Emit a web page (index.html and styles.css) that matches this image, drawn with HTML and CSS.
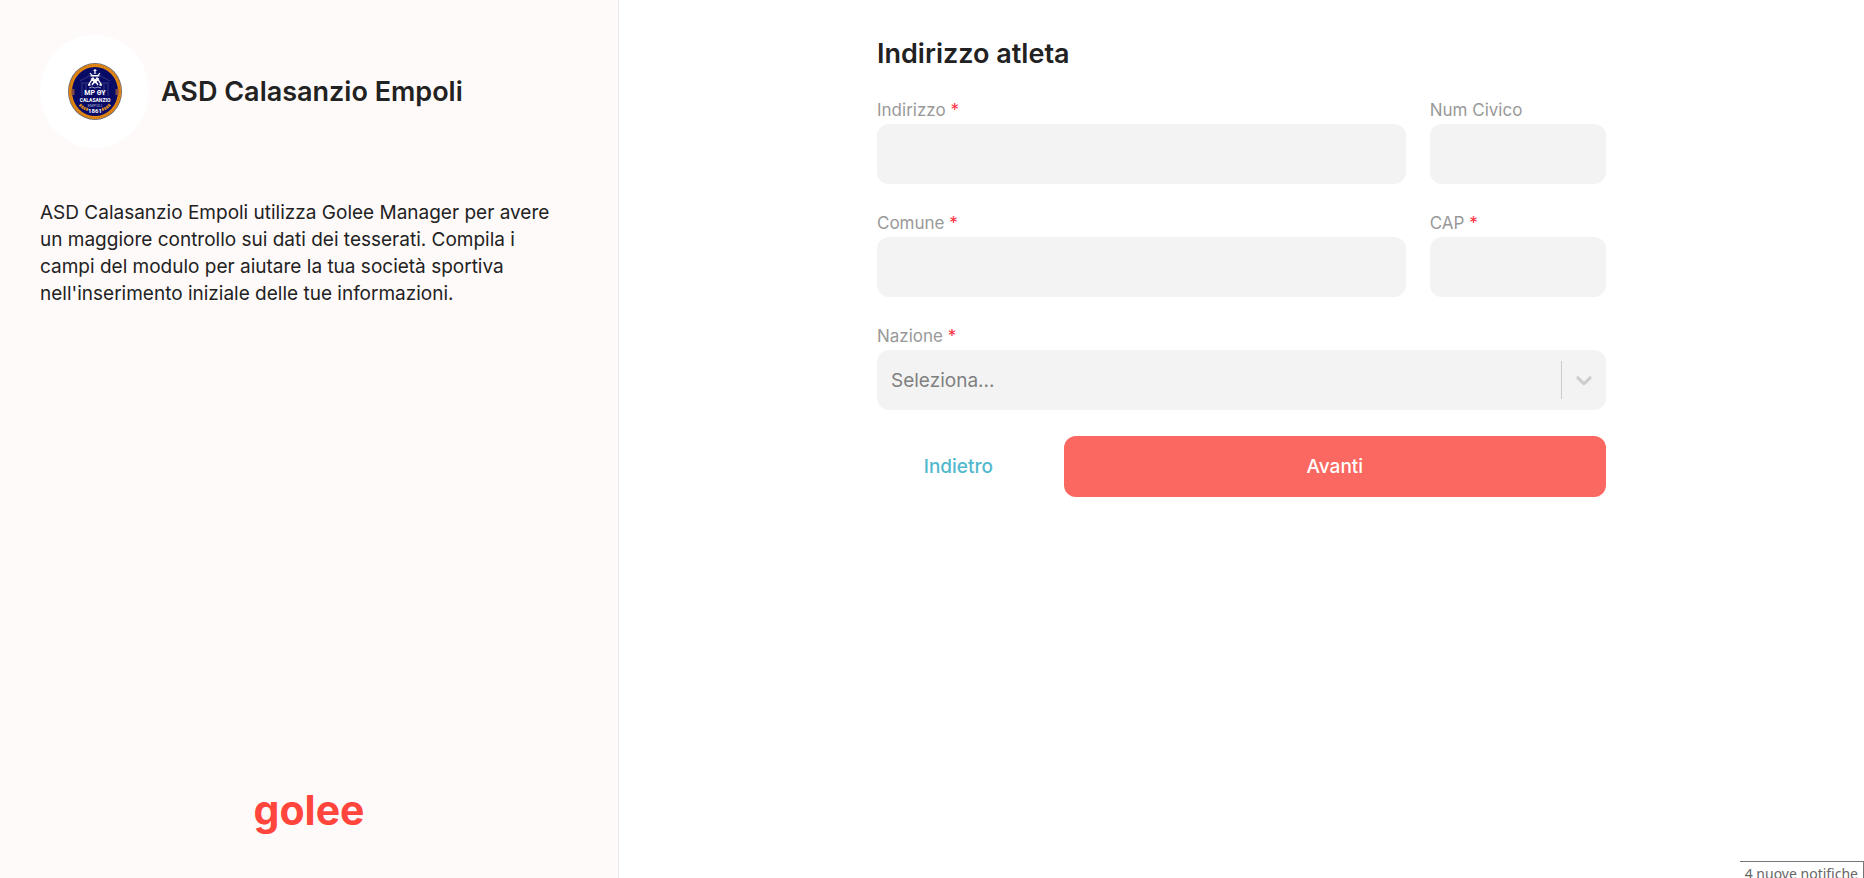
FILE: index.html
```html
<!DOCTYPE html>
<html lang="it">
<head>
    <meta charset="UTF-8">
    <meta name="viewport" content="width=device-width, initial-scale=1.0">
    <title>ASD Calasanzio Empoli - Golee</title>
    <link rel="stylesheet" href="styles.css">
</head>
<body>
    <div class="page">
        <aside class="sidebar">
            <header class="club">
                <div class="club-logo">
                    <svg class="crest" viewBox="0 0 54 57" preserveAspectRatio="none" role="img" aria-label="Stemma Calasanzio Empoli">
                        <ellipse cx="27" cy="28.5" rx="27" ry="28.5" fill="#6d6a70"/>
                        <ellipse cx="27" cy="28.5" rx="26.2" ry="27.7" fill="#e8890f"/>
                        <ellipse cx="27" cy="28.5" rx="24.8" ry="26.3" fill="none" stroke="#a9661f" stroke-width="1" stroke-dasharray="1 1.5"/>
                        <ellipse cx="27" cy="28.5" rx="23" ry="24.6" fill="#080b66"/>
                        <!-- facade -->
                        <path d="M12 18L27 10l15 8M13 20h28M14 21v12M18 21v12M36 21v12M40 21v12" fill="none" stroke="#2a2d76" stroke-width="1.4"/>
                        <path d="M5 26v6M49 26v6" stroke="#7d4a49" stroke-width="3"/>
                        <!-- crown and monogram -->
                        <path d="M27 6v5M25.500 7.500h3M22 10l2 2.500h6l2-2.500M22.500 13h9" fill="none" stroke="#fff" stroke-width="1.200"/>
                        <path d="M20.500 22l4.500-7 5 7M24 22l5-7 4.500 7M23 15.500l4 4 4-4M20 22h2.500M31.500 22h2.500" fill="none" stroke="#fff" stroke-width="1.300"/>
                        <path d="M21 25q3-2 6 0q3-2 6 0" fill="none" stroke="#8d90b8"/>
                        <text class="crest-text" x="27" y="31.500" font-size="7">ΜΡ ΘΥ</text>
                        <text class="crest-text" x="27" y="39" font-size="5">CALASANZIO</text>
                        <text class="crest-text crest-small" x="27" y="44" font-size="4">EMPOLI</text>
                        <text class="crest-text" x="27" y="50" font-size="6">1861</text>
                        <path d="M12 41.500q3 4 8 5M42 41.500q-3 4-8 5" fill="none" stroke="#d98a26" stroke-width="3" stroke-dasharray="2 .6"/>
                    </svg>
                </div>
                <h1 class="club-name">ASD Calasanzio Empoli</h1>
            </header>
            <p class="intro">ASD Calasanzio Empoli utilizza Golee Manager per avere un maggiore controllo sui dati dei tesserati. Compila i campi del modulo per aiutare la tua società sportiva nell'inserimento iniziale delle tue informazioni.</p>
            <div class="brand">golee</div>
        </aside>

        <main class="content">
            <form class="form">
                <h2 class="form-title">Indirizzo atleta</h2>
                <div class="fields">
                    <div class="field">
                        <label for="indirizzo">Indirizzo <span class="required">*</span></label>
                        <input class="control" type="text" id="indirizzo" required>
                    </div>
                    <div class="field">
                        <label for="civico">Num Civico</label>
                        <input class="control" type="text" id="civico">
                    </div>
                    <div class="field">
                        <label for="comune">Comune <span class="required">*</span></label>
                        <input class="control" type="text" id="comune" required>
                    </div>
                    <div class="field">
                        <label for="cap">CAP <span class="required">*</span></label>
                        <input class="control" type="text" id="cap" required>
                    </div>
                    <div class="field field-wide">
                        <label for="nazione">Nazione <span class="required">*</span></label>
                        <div class="select">
                            <select class="control" id="nazione" required>
                                <option value="">Seleziona...</option>
                                <option value="IT">Italia</option>
                            </select>
                            <span class="select-arrow">
                                <svg width="26" height="26" viewBox="0 0 20 20" aria-hidden="true">
                                    <path fill="currentColor" d="M4.516 7.548c0.436-0.446 1.043-0.481 1.576 0l3.908 3.747 3.908-3.747c0.533-0.481 1.141-0.446 1.574 0 0.436 0.445 0.408 1.197 0 1.615-0.406 0.418-4.695 4.502-4.695 4.502-0.217 0.223-0.502 0.335-0.787 0.335s-0.570-0.112-0.789-0.335c0 0-4.287-4.084-4.695-4.502s-0.436-1.170 0-1.615z"/>
                                </svg>
                            </span>
                        </div>
                    </div>
                </div>
                <div class="actions">
                    <button class="btn btn-link" type="button">Indietro</button>
                    <button class="btn btn-primary" type="submit">Avanti</button>
                </div>
            </form>
        </main>
    </div>
    <div class="notice" role="status">4 nuove notifiche</div>
</body>
</html>
```

FILE: styles.css
```css
:root {
    --text: #222;
    --label: #999;
    --field: #f3f3f3;
    --primary: #fb6761;
    --link: #51b9ce;
    --brand: #ff453c;
}

* {
    box-sizing: border-box;
}

body {
    margin: 0;
    font-family: Inter, "Liberation Sans", sans-serif;
    color: var(--text);
    background: #fff;
}

.page {
    display: grid;
    grid-template-columns: 619fr 1245fr;
    min-height: 100vh;
}

.sidebar {
    display: flex;
    flex-direction: column;
    padding: 35px 40px 40px;
    background: #fffafa;
    border-right: 1px solid #ececf0;
}

.club {
    display: flex;
    align-items: center;
    gap: 12px;
}

.club-logo {
    display: grid;
    place-items: center;
    width: 109px;
    height: 113px;
    border-radius: 50%;
    background: #fff;
}

.crest {
    width: 54px;
    height: 57px;
}

.crest-text {
    fill: #fff;
    font-family: Roboto, sans-serif;
    font-weight: 700;
    text-anchor: middle;
}

.crest-small {
    fill: #a9abc9;
    font-weight: 400;
}

.club-name {
    margin: 0;
    font-size: 27px;
    font-weight: 600;
}

.intro {
    max-width: 524px;
    margin: 51px 0 0;
    font-size: 19px;
    line-height: 27px;
}

.brand {
    margin-top: auto;
    text-align: center;
    font-size: 41px;
    font-weight: 700;
    line-height: 56px;
    color: var(--brand);
}

.content {
    padding: 36px 24px;
}

.form {
    max-width: 729px;
    margin: 0 auto;
}

.form-title {
    margin: 0 0 28px;
    font-size: 27px;
    font-weight: 600;
    line-height: 36px;
}

.fields {
    display: grid;
    grid-template-columns: 3fr 1fr;
    gap: 29px 24px;
}

.field {
    display: flex;
    flex-direction: column;
    gap: 4px;
    min-width: 0;
}

.field-wide {
    grid-column: 1 / -1;
}

.field label {
    font-size: 17px;
    line-height: 20px;
    color: var(--label);
}

.field .required {
    color: #ff2d3d;
}

.control {
    width: 100%;
    height: 60px;
    padding: 0 14px;
    border: none;
    border-radius: 12px;
    background: var(--field);
    font: inherit;
    font-size: 19px;
    color: #808080;
    appearance: none;
}

.select {
    position: relative;
}

.select-arrow {
    position: absolute;
    top: 11px;
    bottom: 11px;
    right: 0;
    display: grid;
    place-items: center;
    width: 45px;
    border-left: 1px solid #ccc;
    color: #ccc;
    pointer-events: none;
}

.actions {
    display: grid;
    grid-template-columns: 3fr 10fr;
    gap: 24px;
    margin-top: 26px;
}

.btn {
    height: 61px;
    border: none;
    border-radius: 12px;
    font: inherit;
    font-size: 19px;
    font-weight: 500;
    cursor: pointer;
}

.btn-link {
    background: none;
    color: var(--link);
}

.btn-primary {
    background: var(--primary);
    color: #fff;
}

.notice {
    position: fixed;
    right: 0;
    bottom: -9px;
    padding: 4px 5px;
    border: 1px solid #777;
    border-left: none;
    background: #fff;
    font-family: "Noto Sans", sans-serif;
    font-size: 14px;
    line-height: 16px;
    color: #666;
}
```
